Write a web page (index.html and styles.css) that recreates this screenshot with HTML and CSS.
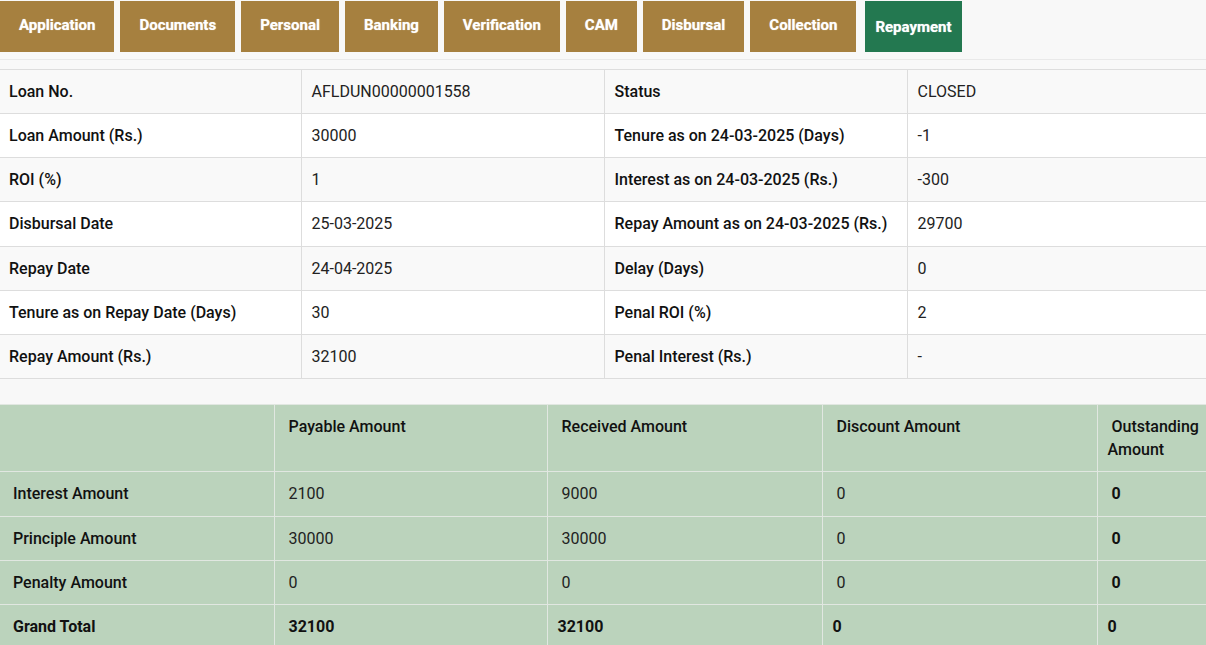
FILE: index.html
```html
<!DOCTYPE html>
<html lang="en">
<head>
<meta charset="utf-8">
<title>Repayment</title>
<link rel="stylesheet" href="styles.css">
</head>
<body>
<nav class="tabs">
  <a class="tab">Application</a>
  <a class="tab">Documents</a>
  <a class="tab">Personal</a>
  <a class="tab">Banking</a>
  <a class="tab">Verification</a>
  <a class="tab">CAM</a>
  <a class="tab">Disbursal</a>
  <a class="tab">Collection</a>
  <a class="tab active">Repayment</a>
</nav>

<table class="info">
  <colgroup><col class="c1"><col class="c2"><col class="c3"><col class="c4"></colgroup>
  <tbody>
    <tr><th>Loan No.</th><td>AFLDUN00000001558</td><th>Status</th><td>CLOSED</td></tr>
    <tr><th>Loan Amount (Rs.)</th><td>30000</td><th>Tenure as on 24-03-2025 (Days)</th><td>-1</td></tr>
    <tr><th>ROI (%)</th><td>1</td><th>Interest as on 24-03-2025 (Rs.)</th><td>-300</td></tr>
    <tr><th>Disbursal Date</th><td>25-03-2025</td><th>Repay Amount as on 24-03-2025 (Rs.)</th><td>29700</td></tr>
    <tr><th>Repay Date</th><td>24-04-2025</td><th>Delay (Days)</th><td>0</td></tr>
    <tr><th>Tenure as on Repay Date (Days)</th><td>30</td><th>Penal ROI (%)</th><td>2</td></tr>
    <tr><th>Repay Amount (Rs.)</th><td>32100</td><th>Penal Interest (Rs.)</th><td>-</td></tr>
  </tbody>
</table>

<table class="summary">
  <colgroup><col class="s1"><col class="s2"><col class="s3"><col class="s4"><col class="s5"></colgroup>
  <thead>
    <tr><th class="lbl"></th><th class="ind">Payable Amount</th><th class="ind">Received Amount</th><th class="ind">Discount Amount</th><th class="ind">Outstanding Amount</th></tr>
  </thead>
  <tbody>
    <tr><th class="lbl">Interest Amount</th><td class="ind">2100</td><td class="ind">9000</td><td class="ind">0</td><td class="ind strong">0</td></tr>
    <tr><th class="lbl">Principle Amount</th><td class="ind">30000</td><td class="ind">30000</td><td class="ind">0</td><td class="ind strong">0</td></tr>
    <tr><th class="lbl">Penalty Amount</th><td class="ind">0</td><td class="ind">0</td><td class="ind">0</td><td class="ind strong">0</td></tr>
    <tr class="total"><th class="lbl">Grand Total</th><td class="ind strong">32100</td><td class="strong">32100</td><td class="strong">0</td><td class="strong">0</td></tr>
  </tbody>
</table>
</body>
</html>
```

FILE: styles.css
```css
html, body {
  margin: 0;
  padding: 0;
  overflow: hidden;
  background: #f8f8f8;
  font-family: Roboto, "Liberation Sans", Arial, sans-serif;
  color: #222;
}

.tabs {
  display: flex;
  gap: 6px;
  padding: 1px 0 7px 0;
  border-bottom: 1px solid #e9e9e9;
}

.tab {
  display: flex;
  align-items: center;
  justify-content: center;
  box-sizing: border-box;
  height: 51px;
  padding: 0 19px 3px;
  background: #a6803f;
  color: #fff;
  font-size: 15px;
  font-weight: 700;
  text-shadow: 0 0 1px rgba(255, 255, 255, 0.7);
  white-space: nowrap;
}

.tab.active {
  background: #237850;
  padding: 0 10px;
  margin-left: 3px;
}

table {
  border-collapse: collapse;
  table-layout: fixed;
  font-size: 16px;
  line-height: 23.15px;
}

.info {
  margin-top: 9px;
  width: 1210px;
}

.info th,
.info td {
  border: 1px solid #dddddd;
  padding: 10px 10px;
  text-align: left;
  vertical-align: top;
  white-space: nowrap;
}

.info tr > :first-child {
  border-left: 0;
  padding-left: 9px;
}

.info th {
  font-weight: 500;
  color: #111;
}

.info td {
  font-weight: 400;
  color: #222;
}

.info tr:nth-child(odd) {
  background: #f9f9f9;
}

.info tr:nth-child(even) {
  background: #ffffff;
}

.info .c1 { width: 301px; }
.info .c2 { width: 303px; }
.info .c3 { width: 303px; }
.info .c4 { width: 303px; }

.summary {
  margin-top: 25px;
  width: 1210px;
  background: #bbd3bc;
}

.summary .s1 { width: 274px; }
.summary .s2 { width: 273px; }
.summary .s3 { width: 275px; }
.summary .s4 { width: 275px; }
.summary .s5 { width: 113px; }

.summary th,
.summary td {
  border: 1px solid #e1e7e1;
  padding: 10px 10px;
  text-align: left;
  vertical-align: top;
  color: #111;
}

.summary th {
  font-weight: 500;
}

.summary td {
  font-weight: 400;
  color: #222;
}

.summary .lbl {
  border-left: 0;
  padding-left: 13px;
}

.summary .ind {
  text-indent: 4px;
}

.summary .strong {
  font-weight: 700;
  color: #111;
}

.summary .total th,
.summary .total td {
  font-weight: 700;
}
```
